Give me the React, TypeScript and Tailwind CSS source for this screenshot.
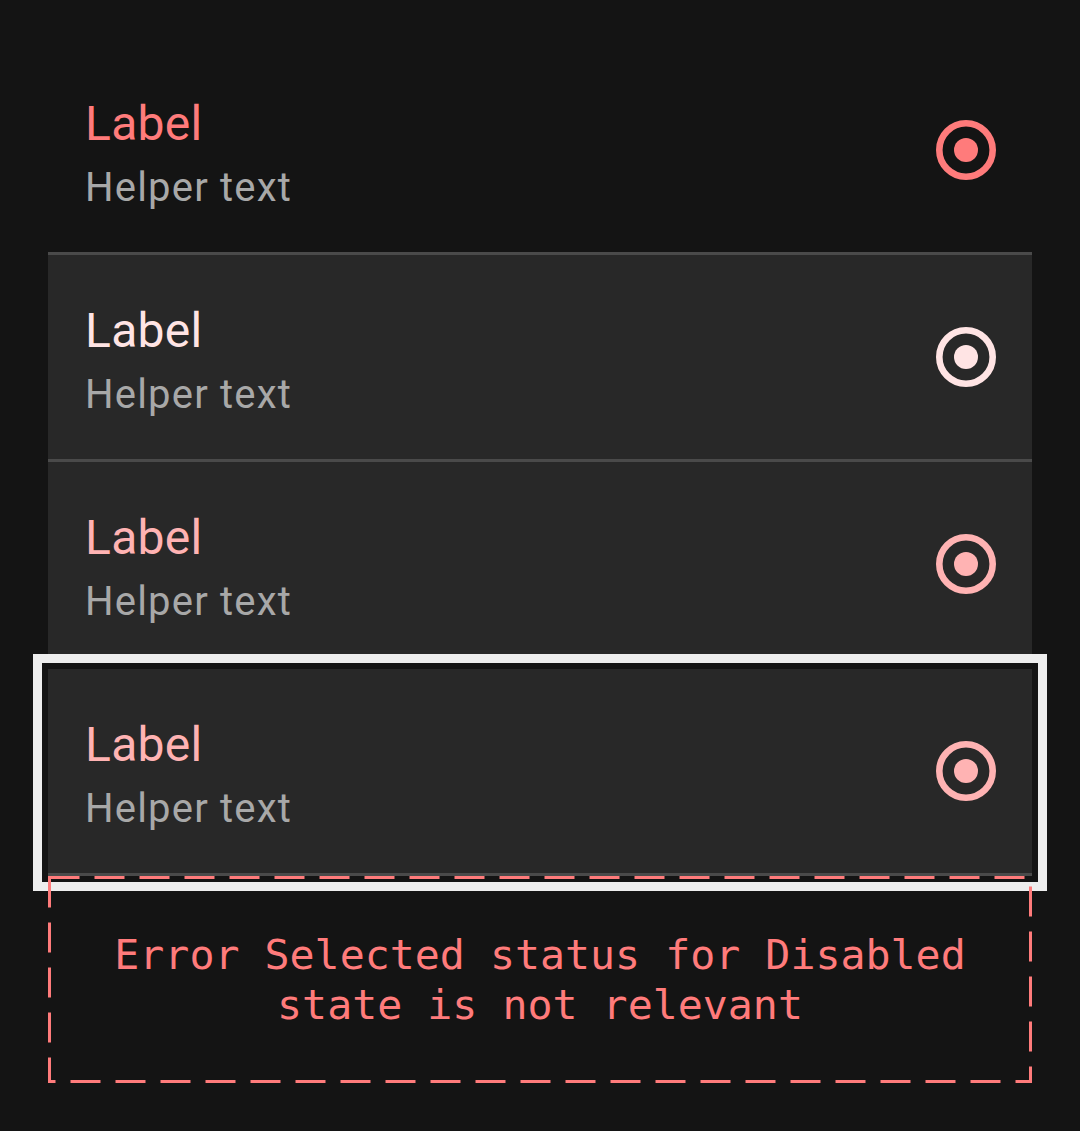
import React from 'react';

type Row = {
  label: string;
  tone: string;
  bg: string;
  focused?: boolean;
};

const rows: Row[] = [
  { label: 'Label', tone: '#ff7b7b', bg: 'bg-[#141414]' },
  { label: 'Label', tone: '#ffe4e4', bg: 'bg-[#282828]' },
  { label: 'Label', tone: '#ffb3b3', bg: 'bg-[#282828]' },
  { label: 'Label', tone: '#ffb3b3', bg: 'bg-[#282828]', focused: true },
];

const Radio = ({ color }: { color: string }) => (
  <svg width="60" height="60" viewBox="0 0 60 60" className="shrink-0">
    <circle cx="30" cy="30" r="26.7" fill="none" stroke={color} strokeWidth="6.6" />
    <circle cx="30" cy="30" r="12" fill={color} />
  </svg>
);

export default function App() {
  return (
    <div className="min-h-[1131px] w-[1080px] bg-[#141414] px-12 pt-12 font-['Roboto',sans-serif]">
      <div className="flex flex-col">
        {rows.map((row, i) => (
          <div
            key={i}
            className={`flex h-[207px] items-center justify-between border-b-[3px] border-[#4a4a4a] pl-[37px] pr-9 ${row.bg} ${
              row.focused ? 'shadow-[0_0_0_6px_#141414,0_0_0_15px_#eeeeee]' : ''
            }`}
          >
            <div className="flex flex-col gap-2 pt-1">
              <span className="text-[48px] leading-[64px] tracking-[0.3px]" style={{ color: row.tone }}>
                {row.label}
              </span>
              <span className="text-[40px] leading-[48px] tracking-[1.2px] text-[#a8a8a8]">Helper text</span>
            </div>
            <Radio color={row.tone} />
          </div>
        ))}

        <div className="relative flex h-[207px] items-center justify-center">
          <svg className="absolute inset-0 h-full w-full" width="984" height="207">
            <rect
              x="1.5"
              y="1.5"
              width="981"
              height="204"
              fill="none"
              stroke="#ff7b7b"
              strokeWidth="3"
              strokeDasharray="30 15"
            />
          </svg>
          <p className="text-center font-['DejaVu_Sans_Mono',monospace] text-[41.6px] leading-[50px] text-[#ff7b7b]">
            Error Selected status for Disabled
            <br />
            state is not relevant
          </p>
        </div>
      </div>
    </div>
  );
}
